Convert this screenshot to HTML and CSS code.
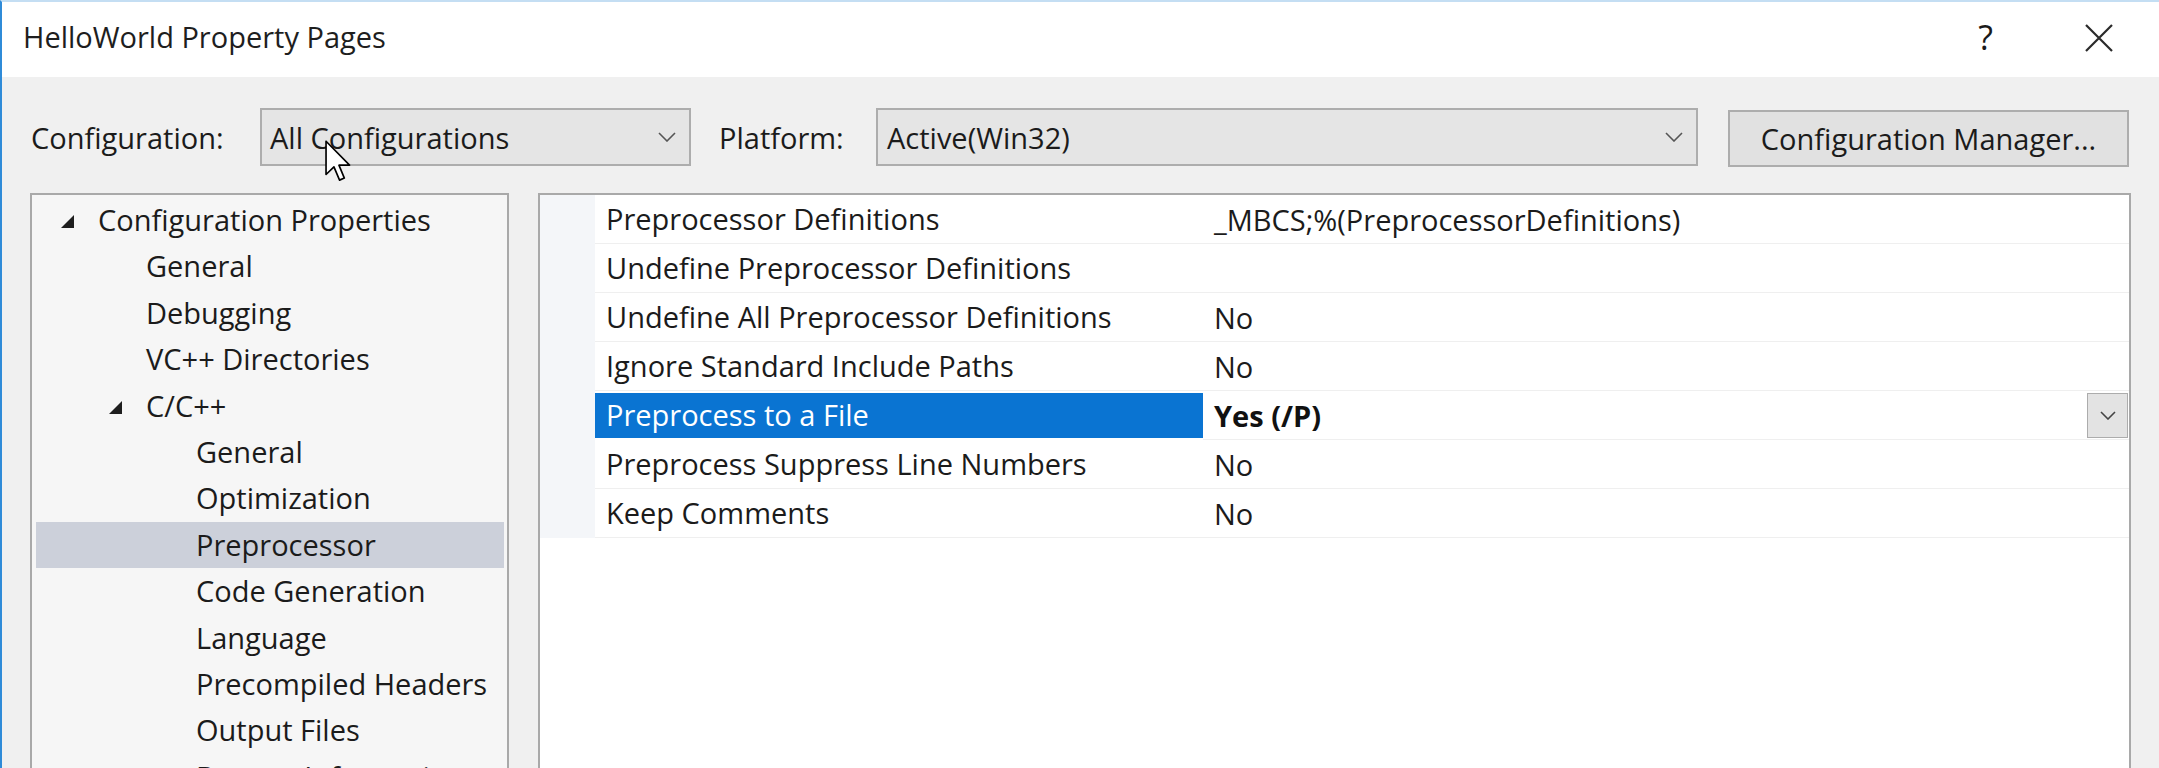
FILE: index.html
```html
<!DOCTYPE html>
<html lang="en">
<head>
<meta charset="utf-8">
<title>HelloWorld Property Pages</title>
<link rel="stylesheet" href="styles.css">
</head>
<body>
<div class="window">
  <div class="titlebar">
    <span class="title">HelloWorld Property Pages</span>
    <div class="caption-btns">
      <span class="help">?</span>
      <svg class="close" width="28" height="28" viewBox="0 0 28 28"><path d="M1 1L27 27M27 1L1 27" stroke="#2a2a2a" stroke-width="2.2" fill="none"/></svg>
    </div>
  </div>

  <div class="toolbar">
    <span class="lbl lbl-config">Configuration:</span>
    <div class="combo combo-config">
      <span>All Configurations</span>
      <svg class="chev" width="18" height="10" viewBox="0 0 18 10"><path d="M1 1L9 9L17 1" stroke="#555" stroke-width="1.6" fill="none"/></svg>
    </div>
    <span class="lbl lbl-platform">Platform:</span>
    <div class="combo combo-platform">
      <span>Active(Win32)</span>
      <svg class="chev" width="18" height="10" viewBox="0 0 18 10"><path d="M1 1L9 9L17 1" stroke="#555" stroke-width="1.6" fill="none"/></svg>
    </div>
    <div class="btn">Configuration Manager...</div>
  </div>

  <div class="panes">
    <div class="tree">
      <div class="node l1"><svg class="arrow" width="16" height="16" viewBox="0 0 16 16"><path d="M15 2L15 15L2 15Z" fill="#1e1e1e"/></svg>Configuration Properties</div>
      <div class="node l2">General</div>
      <div class="node l2">Debugging</div>
      <div class="node l2">VC++ Directories</div>
      <div class="node l2a"><svg class="arrow" width="16" height="16" viewBox="0 0 16 16"><path d="M15 2L15 15L2 15Z" fill="#1e1e1e"/></svg>C/C++</div>
      <div class="node l3">General</div>
      <div class="node l3">Optimization</div>
      <div class="node l3 selected">Preprocessor</div>
      <div class="node l3">Code Generation</div>
      <div class="node l3">Language</div>
      <div class="node l3">Precompiled Headers</div>
      <div class="node l3">Output Files</div>
      <div class="node l3">Browse Information</div>
    </div>

    <div class="grid">
      <div class="prow"><div class="gut"></div><div class="pname">Preprocessor Definitions</div><div class="pval">_MBCS;%(PreprocessorDefinitions)</div></div>
      <div class="prow"><div class="gut"></div><div class="pname">Undefine Preprocessor Definitions</div><div class="pval"></div></div>
      <div class="prow"><div class="gut"></div><div class="pname">Undefine All Preprocessor Definitions</div><div class="pval">No</div></div>
      <div class="prow"><div class="gut"></div><div class="pname">Ignore Standard Include Paths</div><div class="pval">No</div></div>
      <div class="prow active"><div class="gut"></div><div class="pname">Preprocess to a File</div><div class="pval"><b>Yes (/P)</b><span class="ddbtn"><svg width="16" height="9" viewBox="0 0 16 9"><path d="M1 1L8 8L15 1" stroke="#444" stroke-width="1.6" fill="none"/></svg></span></div></div>
      <div class="prow"><div class="gut"></div><div class="pname">Preprocess Suppress Line Numbers</div><div class="pval">No</div></div>
      <div class="prow"><div class="gut"></div><div class="pname">Keep Comments</div><div class="pval">No</div></div>
    </div>
  </div>

  <svg class="cursor" width="26" height="42" viewBox="0 0 12.5 20"><path d="M0.5 0.5L0.5 16.5L4.3 12.8L7 19.2L9.3 18.2L6.7 12L11.8 12Z" fill="#fff" stroke="#000" stroke-width="0.8" stroke-linejoin="round"/></svg>
</div>
</body>
</html>
```

FILE: styles.css
```css
html, body {
  margin: 0;
  padding: 0;
}

body {
  width: 2159px;
  height: 768px;
  overflow: hidden;
  background: #f0f0f0;
  font-family: "Open Sans", "Noto Sans", sans-serif;
  font-size: 29px;
  color: #1b1b1b;
}

.window {
  position: relative;
  height: 768px;
  box-sizing: border-box;
  border-left: 2px solid #2f8bd8;
  border-top: 2px solid #c4def3;
}

/* title bar */
.titlebar {
  height: 75px;
  box-sizing: border-box;
  background: #ffffff;
  display: flex;
  align-items: center;
  padding: 0 46px 6px 21px;
}

.title {
  flex: 1;
  color: #1e1e1e;
}

.caption-btns {
  display: flex;
  align-items: center;
  gap: 92px;
}

.help {
  font-size: 34px;
  line-height: 34px;
  color: #1a1a1a;
  font-weight: 400;
}

.close {
  display: block;
  margin-top: 2px;
}

/* toolbar */
.toolbar {
  display: flex;
  align-items: center;
  height: 58px;
  padding: 31px 0 0 29px;
}

.lbl {
  flex: none;
}

.lbl-config {
  width: 229px;
}

.lbl-platform {
  width: 157px;
  margin-left: 28px;
}

.combo {
  flex: none;
  height: 58px;
  box-sizing: border-box;
  border: 2px solid #adadad;
  background: #e5e5e5;
  display: flex;
  align-items: center;
  justify-content: space-between;
  padding: 0 13px 0 8px;
}

.combo-config {
  width: 431px;
}

.combo-platform {
  width: 822px;
  padding-left: 9px;
}

.chev {
  display: block;
}

.btn {
  flex: none;
  width: 401px;
  height: 57px;
  margin-left: 30px;
  margin-top: 2px;
  box-sizing: border-box;
  border: 2px solid #adadad;
  background: #e1e1e1;
  display: flex;
  align-items: center;
  justify-content: center;
}

/* panes */
.panes {
  display: flex;
  gap: 29px;
  margin-top: 27px;
  padding: 0 28px 0 28px;
}

.tree {
  flex: none;
  width: 479px;
  height: 640px;
  box-sizing: border-box;
  border: 2px solid #a9a9a9;
  background: #f6f6f6;
  padding: 2px 3px 0 4px;
  overflow: hidden;
}

.node {
  height: 46.4px;
  line-height: 46.4px;
  display: flex;
  align-items: center;
  white-space: nowrap;
}

.node .arrow {
  flex: none;
  display: block;
  margin-right: 23px;
  margin-top: 2px;
}

.l1 {
  padding-left: 23px;
}

.l2 {
  padding-left: 110px;
}

.l2a {
  padding-left: 71px;
}

.l3 {
  padding-left: 160px;
}

.selected {
  background: #ccd0da;
}

.grid {
  flex: 1;
  height: 640px;
  box-sizing: border-box;
  border: 2px solid #a9a9a9;
  background: #ffffff;
  overflow: hidden;
}

.prow {
  display: flex;
  height: 49px;
}

.gut {
  flex: none;
  width: 55px;
  background: #f4f6f9;
}

.pname {
  flex: none;
  width: 608px;
  box-sizing: border-box;
  padding-left: 11px;
  line-height: 48px;
  border-bottom: 1px solid #efefef;
  white-space: nowrap;
}

.pval {
  flex: 1;
  display: flex;
  align-items: center;
  box-sizing: border-box;
  padding-left: 11px;
  padding-right: 1px;
  border-bottom: 1px solid #efefef;
  white-space: nowrap;
}

.active .pname {
  background: #0a74d2;
  color: #ffffff;
  border-top: 2px solid #ffffff;
  line-height: 44px;
  border-bottom: 2px solid #ffffff;
}

.pval b {
  font-weight: 700;
  color: #111;
}

.ddbtn {
  margin-left: auto;
  width: 41px;
  height: 45px;
  box-sizing: border-box;
  border: 1px solid #acacac;
  background: #e3e3e3;
  display: flex;
  align-items: center;
  justify-content: center;
}

.ddbtn svg {
  display: block;
}

/* mouse pointer over the configuration combo */
.cursor {
  position: absolute;
  left: 323px;
  top: 138px;
}
```
